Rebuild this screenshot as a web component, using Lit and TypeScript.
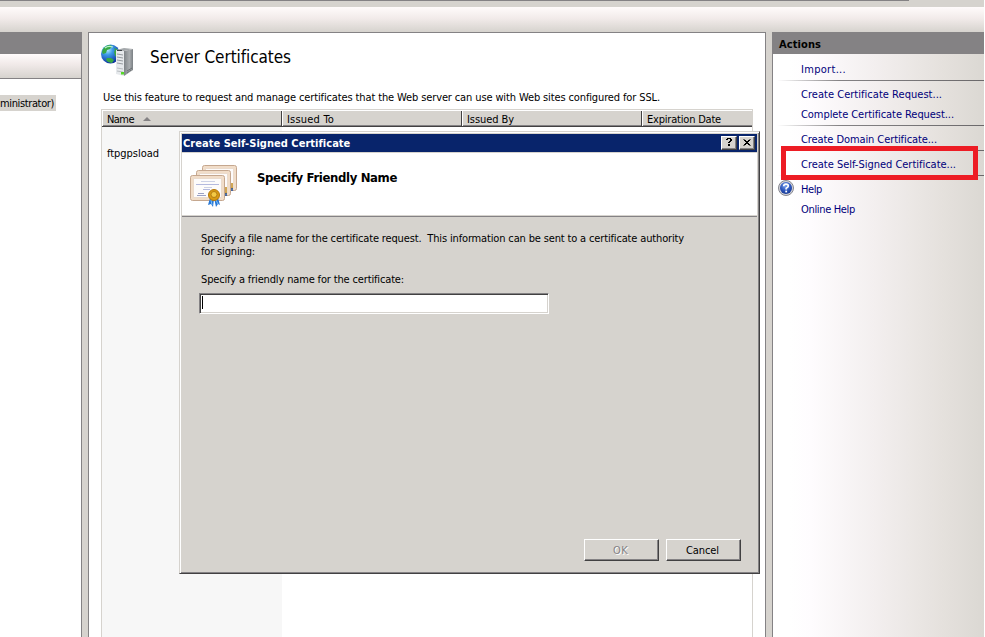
import { LitElement, html, css, svg } from "lit";
import { customElement } from "lit/decorators.js";

// Label whose glyph run is tracked to a given width in pixels.
@customElement("fit-text")
class FitText extends LitElement {
  static properties = { w: { type: Number }, text: { type: String } };
  declare w: number;
  declare text: string;
  static styles = css`
    :host { display: inline-block; white-space: pre; }
    span { display: inline-block; }
  `;
  firstUpdated() {
    const s = this.renderRoot.querySelector("span") as HTMLElement;
    const natural = s.getBoundingClientRect().width;
    s.style.letterSpacing = `${(this.w - natural) / this.text.length}px`;
  }
  render() { return html`<span>${this.text}</span>`; }
}

const t = (text: string, w: number) => html`<fit-text .text=${text} .w=${w}></fit-text>`;

const serverIcon = svg`
  <defs>
    <radialGradient id="gl" cx="35%" cy="28%" r="75%">
      <stop offset="0" stop-color="#b9ecff"/><stop offset=".35" stop-color="#3d9be8"/><stop offset="1" stop-color="#0c2f9c"/>
    </radialGradient>
    <linearGradient id="sd" x1="0" x2="1"><stop offset="0" stop-color="#7f8488"/><stop offset=".6" stop-color="#a9adb0"/><stop offset="1" stop-color="#7b8084"/></linearGradient>
  </defs>
  <circle cx="9.500" cy="10" r="9.500" fill="url(#gl)"/>
  <path d="M2 5Q5 1 9 1l2 1-2 3-3 1-1 3-3 1-1-2zM13 4l3 1 2 4-2 4-2-1-1-4 1-2zM6 14l4 0 3 2-2 3-4-1-2-2z" fill="#38a844"/>
  <path d="M4 4Q7 1.500 12 3" stroke="#bdf3c8" stroke-width="1.300" fill="none"/>
  <path d="M15 6l8 1v25l-8-2z" fill="#e6e9ec"/>
  <path d="M23 7l9-2v21l-9 6z" fill="url(#sd)"/>
  <path d="M15 6l8-2 9 1-9 2z" fill="#a4a8ab"/>
  <path d="M16 6.500h5" stroke="#3f454a"/>
  <path d="M16 10l6 1M16 13l6 1M16 16l6 1M16 19l6 1" stroke="#969ba0" stroke-width="1"/>
  <path d="M16 24l6 1M16 27l6 1" stroke="#b9bdc1" stroke-width="1"/>
  <path d="M26 27l5-3M26 29l4-3" stroke="#5f6468" stroke-width=".8"/>
  <rect x="20" y="28" width="3" height="2.500" fill="#55d827"/>`;

const sheet = (x: number, y: number) => svg`
  <rect x=${x + 0.5} y=${y + 0.5} width="34" height="25" rx="2" fill="#f1ddc9" stroke="#c5a78f"/>
  <rect x=${x + 3.5} y=${y + 3.5} width="28" height="19" fill="#fdfbfb" stroke="#eadbcd"/>`;

const certIcon = svg`
  ${sheet(12, 0)}
  <path d="M42 18v6" stroke="#c28a1c" stroke-width="1.500"/><path d="M42 23v3" stroke="#1b4f9e" stroke-width="1.500"/>
  ${sheet(6, 5)}
  <path d="M36 22v7" stroke="#c28a1c" stroke-width="1.500"/><path d="M36 28v3" stroke="#1b4f9e" stroke-width="1.500"/>
  ${sheet(0, 10)}
  <path d="M11 16.500h14M14 22.500h8" stroke="#cdd1e6"/><path d="M6 19.500h23M13 24.500h7" stroke="#b4b9de"/><path d="M7 30.500h9M8 28.500h6" stroke="#9ca1c4"/>
  <path d="M20 33l-2 7 3-1 2 3 1-8zM24 33l2 9 2-3 2 1-2-7z" fill="#2677d6"/>
  <path d="M21 35l1 5M26 35l2 4" stroke="#7cc0f8" stroke-width="1"/>
  <circle cx="24" cy="30" r="5.500" fill="#d89b13" stroke="#b4760a"/>
  <circle cx="24" cy="29.500" r="3" fill="#f3c945" stroke="#a8700d" stroke-width=".8"/>`;

@customElement("app-root")
class AppRoot extends LitElement {
  static styles = css`
    :host {
      display: block; width: 985px; height: 637px; overflow: hidden; background: #fff;
      font: 11px/13px "DejaVu Sans Condensed", "DejaVu Sans", sans-serif; font-stretch: condensed; color: #000;
    }
    * { box-sizing: border-box; }
    svg { display: block; }
    .window { width: 984px; height: 637px; background: #d6d3ce; display: flex; flex-direction: column; }
    .edge { width: 909px; height: 1px; background: #848284; }
    .gap { height: 6px; }
    .band { height: 25px; background: linear-gradient(#fffbfb, #f2ebea 45%, #d6d3ce); }
    .main { flex: 1; display: flex; gap: 6px; min-height: 0; }
    .tree { width: 82px; background: #fff; border-right: 1px solid #848284; }
    .cap { height: 22px; background: #848284; }
    .tools { height: 25px; background: linear-gradient(#fffbfb, #f0e9e8 45%, #d6d3ce); border-bottom: 1px solid #848284; }
    .node { margin-top: 16px; width: 56px; height: 16px; background: #d6d3ce; display: flex; align-items: center; white-space: nowrap; }
    .center { position: relative; width: 678px; background: #fff; border: 1px solid #848284; border-bottom: 0; padding: 0 12px; display: flex; flex-direction: column; }
    .head { height: 48px; display: flex; padding-top: 11px; }
    .head svg { flex: none; }
    .head h1 { margin: 3px 0 0 16px; font-size: 17px; line-height: 20px; font-weight: 400; }
    .desc { height: 28px; padding: 10px 0 0 2px; }
    .list { flex: 1; border: 1px solid #d6d3ce; border-bottom: 0; display: flex; flex-direction: column; width: 652px; }
    .cols { height: 17px; display: flex; background: #d6d3ce; border-top: 1px solid #fff; border-bottom: 1px solid #424142; }
    .col { width: 180px; border-left: 1px solid #fff; border-right: 1px solid #424142; box-shadow: inset 0 -1px #848284; padding: 2px 0 0 4px; display: flex; gap: 9px; }
    .col:last-child { width: 110px; border-right: 0; }
    .up { width: 0; height: 0; margin-top: 4px; border: 4px solid transparent; border-top: 0; border-bottom: 4px solid #848284; }
    .body { flex: 1; width: 180px; background: #f7f7f7; padding: 20px 0 0 5px; }
    .actions { flex: 1; border-left: 1px solid #848284; background: linear-gradient(90deg, #fff 8%, #fefcfe 18%, #f3efef 48%, #e5e1dd 80%, #dbd8d3); }
    .actions .cap { margin-left: -1px; padding: 6px 0 0 7px; font-weight: 700; }
    .links { padding-top: 5px; color: #00007b; }
    .item { height: 20px; padding-left: 28px; display: flex; align-items: center; }
    .item svg { margin: -2px 7px 0 -23px; }
    .sep { height: 5px; padding-top: 1px; }
    .sep::before { content: ""; display: block; height: 1px; margin-left: 4px; background: linear-gradient(90deg, transparent, #848284 30%, #6b696b); }
    .mark { position: absolute; left: 781px; top: 146px; width: 197px; height: 34px; border: 5px solid #ed1c24; }
    .dialog { position: absolute; left: 90px; top: 98px; width: 581px; height: 443px; background: #d6d3ce;
      border: 1px solid; border-color: #d6d3ce #424142 #424142 #d6d3ce;
      box-shadow: inset 1px 1px #fff, inset -1px -1px #848284; padding: 2px; }
    .title { height: 18px; background: #08246b; color: #fff; font-weight: 700; display: flex; align-items: center; padding: 0 2px 0 1px; }
    .title fit-text { flex: 1; }
    .sys { width: 16px; height: 14px; margin-left: 2px; background: #d6d3ce; border: 1px solid; border-color: #fff #424142 #424142 #fff; box-shadow: inset -1px -1px #848284; }
    .banner { margin-top: 1px; height: 64px; background: #fff; border-bottom: 1px solid #848284; display: flex; padding: 12px 0 0 8px; box-shadow: inset 0 -1px #d6d3ce; }
    .banner h2 { margin: 5px 0 0 19px; font-size: 13px; line-height: 16px; font-weight: 700; }
    .form { padding: 15px 0 0 17px; height: 322px; }
    .form p { margin: 0 0 15px 2px; }
    .field { width: 350px; height: 21px; margin-top: -8px; background: #fff; border: 1px solid; border-color: #848284 #fff #fff #848284; box-shadow: inset 1px 1px #424142, inset -1px -1px #d6d3ce; padding: 2px; }
    .caret { width: 1px; height: 13px; background: #000; }
    .buttons { display: flex; justify-content: flex-end; gap: 7px; padding-right: 16px; }
    .btn { width: 75px; height: 22px; border: 1px solid; border-color: #fff #424142 #424142 #fff; box-shadow: inset -1px -1px #848284; display: flex; align-items: center; justify-content: center; padding-right: 2px; }
    .off { color: #848284; text-shadow: 1px 1px #fff; }
  `;
  render() {
    return html`
    <div class="window">
      <div class="edge"></div><div class="gap"></div><div class="band"></div>
      <div class="main">
        <div class="tree">
          <div class="cap"></div><div class="tools"></div>
          <div class="node">${t("ministrator)", 54)}</div>
        </div>
        <div class="center">
          <div class="head"><svg width="33" height="34">${serverIcon}</svg><h1>${t("Server Certificates", 141)}</h1></div>
          <div class="desc">${t("Use this feature to request and manage certificates that the Web server can use with Web sites configured for SSL.", 557)}</div>
          <div class="list">
            <div class="cols">
              <div class="col">${t("Name", 27)}<i class="up"></i></div>
              <div class="col">${t("Issued To", 47)}</div>
              <div class="col">${t("Issued By", 47)}</div>
              <div class="col">${t("Expiration Date", 74)}</div>
            </div>
            <div class="body">${t("ftpgpsload", 52)}</div>
          </div>
          <div class="dialog">
            <div class="title">${t("Create Self-Signed Certificate", 167)}
              <div class="sys"><svg width="14" height="12"><path d="M4 2h1V1h4v1h1v2H9v1H8v1H6V5h1V4h1V2H6v1H4zM6 7h2v2H6z" fill="#000"/></svg></div>
              <div class="sys"><svg width="14" height="12"><path d="M3.500 2.500l6 6M4.500 2.500l6 6M9.500 2.500l-6 6M10.500 2.500l-6 6" stroke="#000"/></svg></div>
            </div>
            <div class="banner"><svg width="48" height="43">${certIcon}</svg><h2>${t("Specify Friendly Name", 140)}</h2></div>
            <div class="form">
              <p>${t("Specify a file name for the certificate request.  This information can be sent to a certificate authority", 483)}<br>${t("for signing:", 54)}</p>
              <p>${t("Specify a friendly name for the certificate:", 203)}</p>
              <div class="field"><div class="caret"></div></div>
            </div>
            <div class="buttons"><div class="btn off">${t("OK", 15)}</div><div class="btn">${t("Cancel", 33)}</div></div>
          </div>
        </div>
        <div class="actions">
          <div class="cap">${t("Actions", 42)}</div>
          <div class="links">
            <div class="item">${t("Import...", 45)}</div><div class="sep"></div>
            <div class="item">${t("Create Certificate Request...", 141)}</div>
            <div class="item">${t("Complete Certificate Request...", 153)}</div><div class="sep"></div>
            <div class="item">${t("Create Domain Certificate...", 136)}</div><div class="sep"></div>
            <div class="item">${t("Create Self-Signed Certificate...", 155)}</div><div class="sep"></div>
            <div class="item"><svg width="16" height="16">
              <defs><radialGradient id="hp" cx="45%" cy="30%" r="70%"><stop offset="0" stop-color="#7ba3ee"/><stop offset=".6" stop-color="#2c55bb"/><stop offset="1" stop-color="#173a94"/></radialGradient></defs>
              <circle cx="8" cy="8" r="7.500" fill="#d4d4da" stroke="#85868e"/><circle cx="8" cy="8" r="6" fill="url(#hp)"/>
              <path d="M5.700 6.300Q5.700 4.200 8 4.200T10.300 6Q10.300 7.200 8.200 8.200V9.500" fill="none" stroke="#fff" stroke-width="1.700"/><rect x="7.300" y="10.600" width="1.800" height="1.800" fill="#fff"/></svg>${t("Help", 21)}</div>
            <div class="item">${t("Online Help", 54)}</div>
          </div>
        </div>
      </div>
    </div>
    <div class="mark"></div>`;
  }
}
